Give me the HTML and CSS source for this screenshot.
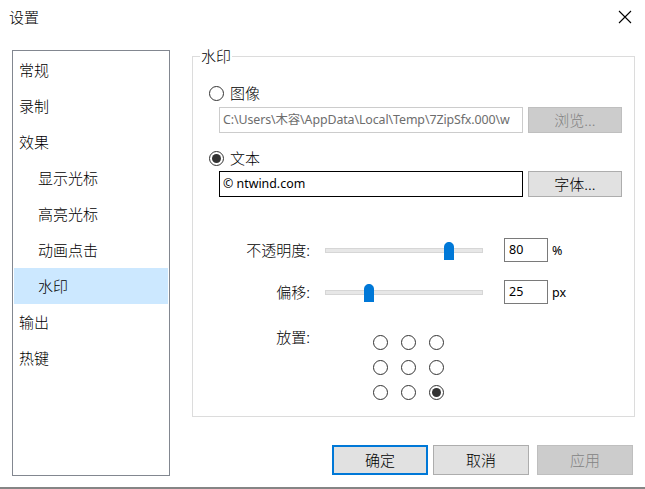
FILE: index.html
```html
<!DOCTYPE html>
<html lang="zh-CN">
<head>
<meta charset="utf-8">
<title>设置</title>
<link rel="stylesheet" href="styles.css">
</head>
<body>
<div class="window">
  <header class="titlebar">
    <span class="title">设置</span>
    <svg class="close" width="14" height="14" viewBox="0 0 14 14"><path d="M1 1L13 13M13 1L1 13" stroke="#000" stroke-width="1.1" fill="none"/></svg>
  </header>
  <div class="content">
    <nav class="nav">
      <div class="nav-item">常规</div>
      <div class="nav-item">录制</div>
      <div class="nav-item">效果</div>
      <div class="nav-item sub">显示光标</div>
      <div class="nav-item sub">高亮光标</div>
      <div class="nav-item sub">动画点击</div>
      <div class="nav-item sub active">水印</div>
      <div class="nav-item">输出</div>
      <div class="nav-item">热键</div>
    </nav>
    <div class="right">
      <section class="group">
        <div class="group-title">水印</div>
        <div class="radio-row row-image"><span class="radio"></span><span class="radio-label">图像</span></div>
        <div class="field-row row-path">
          <div class="input input-disabled"><span class="path-text">C:\Users\木容\AppData\Local\Temp\7ZipSfx.000\w</span></div>
          <div class="btn btn-disabled">浏览...</div>
        </div>
        <div class="radio-row row-text"><span class="radio checked"></span><span class="radio-label">文本</span></div>
        <div class="field-row row-textinput">
          <div class="input input-dark">© ntwind.com</div>
          <div class="btn">字体...</div>
        </div>
        <div class="slider-row row-opacity">
          <span class="slabel">不透明度:</span>
          <div class="track"><svg class="thumb" style="left:118px" width="10" height="18" viewBox="0 0 10 18"><path d="M0 18V5C0 2 2.5 0 5 0S10 2 10 5V18Z" fill="#0078d7"/></svg></div>
          <div class="num">80</div>
          <span class="unit">%</span>
        </div>
        <div class="slider-row row-offset">
          <span class="slabel">偏移:</span>
          <div class="track"><svg class="thumb" style="left:38px" width="10" height="18" viewBox="0 0 10 18"><path d="M0 18V5C0 2 2.5 0 5 0S10 2 10 5V18Z" fill="#0078d7"/></svg></div>
          <div class="num">25</div>
          <span class="unit">px</span>
        </div>
        <div class="place-row">
          <span class="slabel">放置:</span>
          <div class="place-grid">
            <span class="radio"></span><span class="radio"></span><span class="radio"></span>
            <span class="radio"></span><span class="radio"></span><span class="radio"></span>
            <span class="radio"></span><span class="radio"></span><span class="radio checked"></span>
          </div>
        </div>
      </section>
      <div class="buttons">
        <div class="btn btn-lg btn-default">确定</div>
        <div class="btn btn-lg">取消</div>
        <div class="btn btn-lg btn-disabled btn-apply">应用</div>
      </div>
    </div>
  </div>
  <div class="bottom-line"></div>
</div>
</body>
</html>
```
FILE: styles.css
```css
* { box-sizing: border-box; }
html, body { margin: 0; padding: 0; background: #fff; }
body {
  font-family: "Noto Sans CJK SC", "Noto Sans", sans-serif;
  font-size: 15px;
  font-weight: 300;
  color: #000;
}
.window {
  width: 645px;
  height: 489px;
  display: flex;
  flex-direction: column;
  overflow: hidden;
}
.titlebar {
  height: 50px;
  flex: none;
  display: flex;
  justify-content: space-between;
  align-items: flex-start;
  padding: 7px 13px 0 9px;
}
.title { line-height: 20px; }
.close { margin-top: 3px; }

.content {
  display: flex;
  flex: none;
  height: 426px;
}
.nav {
  width: 158px;
  height: 426px;
  margin-left: 12px;
  border: 1px solid #828790;
  padding: 1px;
}
.nav-item {
  height: 36px;
  line-height: 36px;
  padding-left: 5px;
}
.nav-item.sub { padding-left: 24px; }
.nav-item.active { background: #cce8ff; }

.right {
  margin-left: 22px;
  width: 443px;
}
.group {
  position: relative;
  margin-top: 6px;
  height: 361px;
  border: 1px solid #dcdcdc;
}
.group-title {
  position: absolute;
  top: -11px;
  left: 7px;
  padding: 0 1px;
  background: #fff;
  line-height: 20px;
}
.radio {
  width: 15px;
  height: 15px;
  border: 1px solid #333;
  border-radius: 50%;
  display: flex;
  align-items: center;
  justify-content: center;
  background: #fff;
}
.radio.checked::after {
  content: "";
  width: 9px;
  height: 9px;
  border-radius: 50%;
  background: #333;
}
.radio-row {
  display: flex;
  align-items: center;
  height: 20px;
  padding-left: 16px;
}
.radio-label { margin-left: 6px; line-height: 20px; }
.row-image { margin-top: 26px; }
.row-text { margin-top: 15px; }

.field-row {
  display: flex;
  padding-left: 26px;
  height: 26px;
  gap: 5px;
}
.row-path { margin-top: 4px; }
.row-textinput { margin-top: 3px; }
.input {
  width: 304px;
  height: 26px;
  border: 1px solid #cccccc;
  padding: 0 3px;
  font-family: "Noto Sans", "Noto Sans CJK SC", sans-serif;
  font-weight: 400;
  font-size: 12.4px;
  line-height: 24px;
  white-space: nowrap;
  overflow: hidden;
}
.path-text { letter-spacing: -0.1px; }
.input-disabled { color: #6d6d6d; }
.input-dark { border-color: #000; color: #000; }
.btn {
  width: 94px;
  height: 26px;
  background: #e1e1e1;
  border: 1px solid #adadad;
  display: flex;
  align-items: center;
  justify-content: center;
  font-size: 15px;
  line-height: 20px;
}
.btn-disabled {
  background: #cccccc;
  border-color: #bfbfbf;
  color: #838383;
}

.slider-row {
  display: flex;
  align-items: center;
  height: 24px;
}
.row-opacity { margin-top: 41px; }
.row-offset { margin-top: 18px; }
.slabel {
  width: 117px;
  text-align: right;
  line-height: 20px;
  flex: none;
}
.track {
  position: relative;
  margin-left: 15px;
  width: 158px;
  height: 5px;
  background: #e7e7e7;
  border: 1px solid #d6d6d6;
}
.thumb {
  position: absolute;
  top: -7px;
  display: block;
}
.num {
  margin-left: 21px;
  width: 44px;
  height: 24px;
  border: 1px solid #7a7a7a;
  padding-left: 4px;
  font-family: "Noto Sans", sans-serif;
  font-weight: 400;
  font-size: 12.5px;
  line-height: 22px;
}
.unit {
  margin-left: 4px;
  font-family: "Noto Sans", sans-serif;
  font-weight: 400;
  font-size: 12.5px;
}

.place-row {
  display: flex;
  margin-top: 23px;
}
.place-grid {
  margin-left: 63px;
  margin-top: 8px;
  display: grid;
  grid-template-columns: repeat(3, 15px);
  column-gap: 13px;
  row-gap: 10px;
}

.buttons {
  display: flex;
  margin-top: 28px;
  margin-left: 140px;
  gap: 5px;
}
.btn-lg { width: 96px; height: 30px; }
.btn-default { border: 2px solid #0078d7; }
.btn-apply { margin-left: 3px; }

.bottom-line {
  margin-top: auto;
  height: 2px;
  background: #858585;
  flex: none;
}
```
